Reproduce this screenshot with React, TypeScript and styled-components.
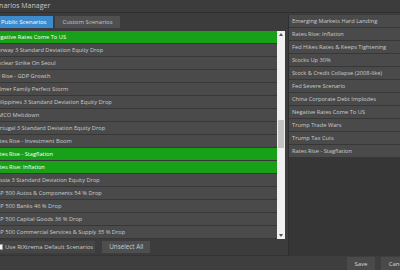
import React from "react";
import styled, { createGlobalStyle, css } from "styled-components";

const GlobalStyle = createGlobalStyle`
    html, body {
        margin: 0;
        padding: 0;
        overflow: hidden;
        background: #3c3c3c;
    }
`;

const publicScenarios = [
    { name: "Negative Rates Come To US", selected: true },
    { name: "Norway 3 Standard Deviation Equity Drop" },
    { name: "Nuclear Strike On Seoul" },
    { name: "Oil Rise - GDP Growth" },
    { name: "Palmer Family Perfect Storm" },
    { name: "Philippines 3 Standard Deviation Equity Drop" },
    { name: "PIMCO Meltdown" },
    { name: "Portugal 3 Standard Deviation Equity Drop" },
    { name: "Rates Rise - Investment Boom" },
    { name: "Rates Rise - Stagflation", selected: true },
    { name: "Rates Rise: Inflation", selected: true },
    { name: "Russia 3 Standard Deviation Equity Drop" },
    { name: "S&P 500 Autos & Components 54 % Drop" },
    { name: "S&P 500 Banks 46 % Drop" },
    { name: "S&P 500 Capital Goods 36 % Drop" },
    { name: "S&P 500 Commercial Services & Supply 35 % Drop" },
];

const chosenScenarios = [
    "Emerging Markets Hard Landing",
    "Rates Rise: Inflation",
    "Fed Hikes Rates & Keeps Tightening",
    "Stocks Up 30%",
    "Stock & Credit Collapse (2008-like)",
    "Fed Severe Scenario",
    "China Corporate Debt Implodes",
    "Negative Rates Come To US",
    "Trump Trade Wars",
    "Trump Tax Cuts",
    "Rates Rise - Stagflation",
];

const Window = styled.div`
    width: 430px;
    height: 270px;
    margin-left: -12px;
    background: #3c3c3c;
    font-family: "Open Sans", "DejaVu Sans", sans-serif;
    color: #cacaca;
    display: flex;
    flex-direction: column;
`;

const TitleBar = styled.div`
    height: 12px;
    line-height: 12px;
    font-size: 7px;
    color: #c8c8c8;
    border-bottom: 1px solid #2f2f2f;
    flex-shrink: 0;
`;

const Main = styled.div`
    display: flex;
    height: 242px;
    flex-shrink: 0;
`;

const LeftPane = styled.div`
    width: 297px;
    display: flex;
    flex-direction: column;
`;

const TabStrip = styled.div`
    height: 18px;
    box-sizing: border-box;
    padding: 3px 0 3px 6px;
    display: flex;
    gap: 2px;
`;

type TTab = {
    readonly active?: boolean;
}
const Tab = styled.div<TTab>`
    height: 12px;
    line-height: 12px;
    padding: 0 7px;
    font-size: 6px;
    ${props => props.active && css`
    background: #3d8bcc;
    color: #ffffff;
    `}
    ${props => !props.active && css`
    background: #505050;
    color: #c4c4c4;
    `}
`;

const ListBox = styled.div`
    height: 208px;
    display: flex;
`;

const Rows = styled.div`
    flex: 1;
    display: flex;
    flex-direction: column;
`;

type TRow = {
    readonly selected?: boolean;
}
const Row = styled.div<TRow>`
    height: 12px;
    line-height: 12px;
    padding-left: 5px;
    font-size: 5.7px;
    white-space: nowrap;
    overflow: hidden;
    border-bottom: 1px solid #373737;
    ${props => props.selected && css`
    background: #19a019;
    color: #ffffff;
    `}
    ${props => !props.selected && css`
    background: #4a4a4a;
    color: #cacaca;
    `}
`;

const Scrollbar = styled.div`
    width: 8px;
    background: #f0f0f0;
    display: flex;
    flex-direction: column;
`;

const ArrowBox = styled.div`
    height: 7px;
    display: flex;
    align-items: center;
    justify-content: center;
`;

const Track = styled.div`
    flex: 1;
`;

const Thumb = styled.div`
    width: 6px;
    margin: 0 1px;
    background: #c3c3c3;
`;

const Footer = styled.div`
    height: 16px;
    display: flex;
    align-items: center;
    gap: 7px;
`;

const CheckLabel = styled.label`
    height: 12px;
    display: flex;
    align-items: center;
    gap: 2px;
    padding: 0 2px 0 9px;
    background: #454545;
    font-size: 6px;
    color: #cacaca;
`;

const CheckBox = styled.span`
    width: 6px;
    height: 6px;
    background: #f4f4f4;
    border: 1px solid #9a9a9a;
    box-sizing: border-box;
`;

const Button = styled.div`
    height: 12px;
    line-height: 12px;
    padding: 0 7px;
    background: #4e4e4e;
    font-size: 6.3px;
    color: #cacaca;
`;

const RightPane = styled.div`
    flex: 1;
    margin: 2px 0 0 3px;
    background: #363636;
    border-left: 1px solid #2e2e2e;
    display: flex;
    flex-direction: column;
`;

const ChosenRow = styled(Row)`
    padding-left: 3px;
`;

const BottomBar = styled.div`
    flex: 1;
    display: flex;
    justify-content: flex-end;
    gap: 6px;
    padding: 1px 3px 0 0;
    border-top: 1px solid #343434;
    background: #3e3e3e;
`;

const DialogButton = styled.div<{ w: number }>`
    width: ${props => props.w}px;
    height: 16px;
    line-height: 14px;
    text-align: center;
    background: #4a4a4a;
    font-size: 6px;
    color: #d4d4d4;
`;

const Arrow = ({ up }: { up?: boolean }) => (
    <svg width="4" height="3" viewBox="0 0 4 3">
        <path d={up ? "M0 3 L2 0 L4 3 Z" : "M0 0 L2 3 L4 0 Z"} fill="#505050" />
    </svg>
);

export default function App() {
    return (
        <>
            <GlobalStyle />
            <Window>
                <TitleBar>Scenarios Manager</TitleBar>
                <Main>
                    <LeftPane>
                        <TabStrip>
                            <Tab active>Public Scenarios</Tab>
                            <Tab>Custom Scenarios</Tab>
                        </TabStrip>
                        <ListBox>
                            <Rows>
                                {publicScenarios.map((s) => (
                                    <Row key={s.name} selected={s.selected}>{s.name}</Row>
                                ))}
                            </Rows>
                            <Scrollbar>
                                <ArrowBox><Arrow up /></ArrowBox>
                                <Track>
                                    <Thumb style={{ marginTop: 82, height: 28 }} />
                                </Track>
                                <ArrowBox><Arrow /></ArrowBox>
                            </Scrollbar>
                        </ListBox>
                        <Footer>
                            <CheckLabel>
                                <CheckBox />
                                Use RiXtrema Default Scenarios
                            </CheckLabel>
                            <Button>Unselect All</Button>
                        </Footer>
                    </LeftPane>
                    <RightPane>
                        {chosenScenarios.map((name) => (
                            <ChosenRow key={name}>{name}</ChosenRow>
                        ))}
                    </RightPane>
                </Main>
                <BottomBar>
                    <DialogButton w={28}>Save</DialogButton>
                    <DialogButton w={34}>Cancel</DialogButton>
                </BottomBar>
            </Window>
        </>
    );
}
